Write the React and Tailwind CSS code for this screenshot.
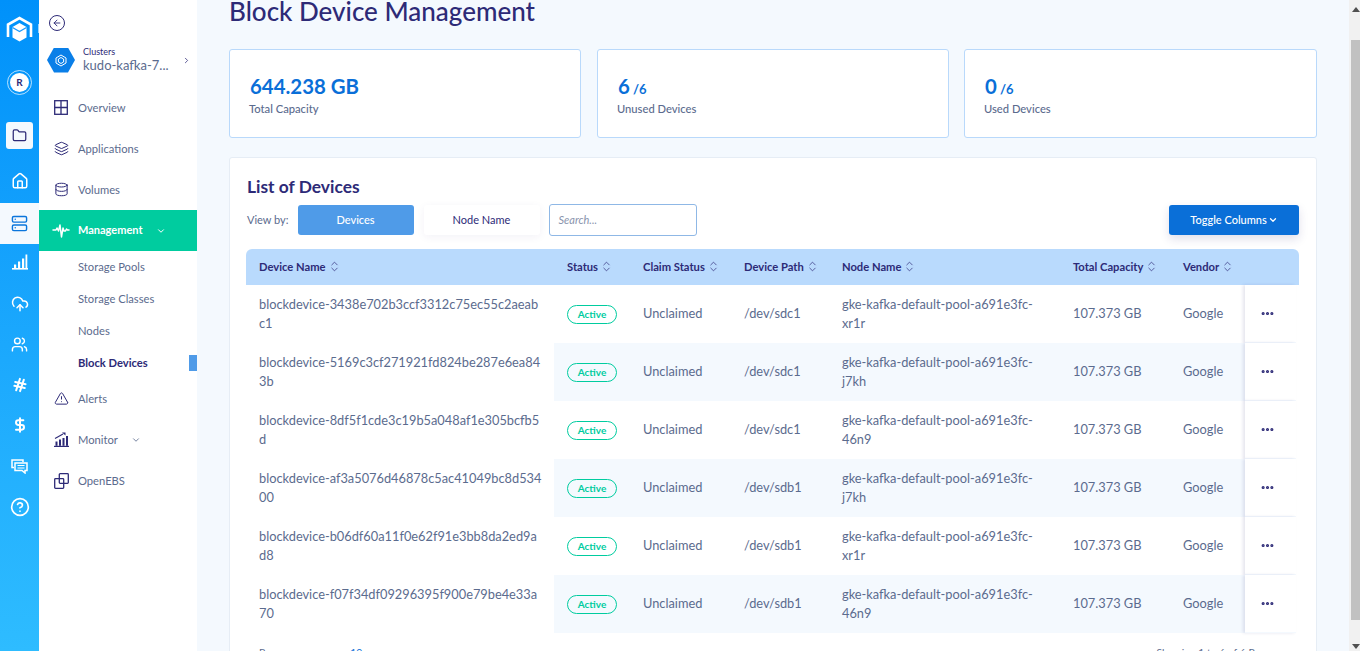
import {
  ArrowLeft,
  ChevronDown,
  ChevronRight,
  ChevronsUpDown,
  CircleHelp,
  CloudUpload,
  Database,
  DollarSign,
  Folder,
  Hash,
  House,
  Layers,
  MoreHorizontal,
  Server,
  TriangleAlert,
  Users,
} from "lucide-react";

const devices = [
  ["blockdevice-3438e702b3ccf3312c75ec55c2aeab", "c1", "/dev/sdc1", "xr1r"],
  ["blockdevice-5169c3cf271921fd824be287e6ea84", "3b", "/dev/sdc1", "j7kh"],
  ["blockdevice-8df5f1cde3c19b5a048af1e305bcfb5", "d", "/dev/sdc1", "46n9"],
  ["blockdevice-af3a5076d46878c5ac41049bc8d534", "00", "/dev/sdb1", "j7kh"],
  ["blockdevice-b06df60a11f0e62f91e3bb8da2ed9a", "d8", "/dev/sdb1", "xr1r"],
  ["blockdevice-f07f34df09296395f900e79be4e33a", "70", "/dev/sdb1", "46n9"],
];

const columns = [
  { label: "Device Name", width: "w-[321px] pl-[13px]" },
  { label: "Status", width: "w-[76px]" },
  { label: "Claim Status", width: "w-[101px]" },
  { label: "Device Path", width: "w-[98px]" },
  { label: "Node Name", width: "w-[231px]" },
  { label: "Total Capacity", width: "w-[110px]" },
  { label: "Vendor", width: "w-[100px]" },
];

const LogoCube = () => (
  <svg width="27" height="26" viewBox="0 0 27 26" fill="none">
    <path d="M2 21V8.500L13.500 2 25 8.500V21" stroke="#fff" strokeWidth="2.6" />
    <path d="M13.500 7l7 4v10.500l-7 4-7-4V11z" fill="#fff" />
    <path d="M6.500 11.500l7 4 7-4" stroke="#1a99fb" strokeWidth="1.3" />
  </svg>
);

const OverviewIcon = ({ className }) => (
  <svg width="14" height="15" viewBox="0 0 14 15" fill="none" stroke="currentColor" strokeWidth="1.3" className={className}>
    <rect x="0.700" y="0.700" width="12.600" height="13.600" />
    <path d="M7 0.700v13.600M0.700 7.500h12.600" />
  </svg>
);

const MonitorIcon = ({ className }) => (
  <svg width="15" height="15" viewBox="0 0 15 15" fill="currentColor" className={className}>
    <rect x="0" y="13.800" width="15" height="1.200" />
    <rect x="1.500" y="9.500" width="2" height="4.300" />
    <rect x="5" y="7.500" width="2" height="6.300" />
    <rect x="8.500" y="6" width="2" height="7.800" />
    <rect x="12" y="4" width="2" height="9.800" />
    <path d="M1 6.500l8-4.500" stroke="currentColor" strokeWidth="1.100" fill="none" />
    <path d="M8 0.500h3.500v3z" />
  </svg>
);

const OverlapIcon = ({ className }) => (
  <svg width="15" height="16" viewBox="0 0 15 16" fill="none" stroke="currentColor" strokeWidth="1.300" className={className}>
    <rect x="0.700" y="5.700" width="9" height="9.600" rx="0.800" />
    <rect x="5.300" y="0.700" width="9" height="9.600" rx="0.800" />
  </svg>
);

const RailChart = () => (
  <svg width="16" height="16" viewBox="0 0 16 16" fill="#fff">
    <rect x="0" y="14" width="16" height="1.600" />
    <rect x="2" y="10.500" width="2.200" height="3.500" />
    <rect x="6" y="7.500" width="2.200" height="6.500" />
    <rect x="10" y="4.500" width="2.200" height="9.500" />
    <rect x="13.500" y="0.500" width="1.800" height="13.500" />
  </svg>
);

const RailChat = () => (
  <svg width="17" height="15" viewBox="0 0 17 15" fill="none" stroke="#fff" strokeWidth="1.500">
    <path d="M12 3V1H1v7.500h2" />
    <path d="M4 4h12v7.500h-2v2.500l-3-2.500H4z" />
    <path d="M6.500 6.500h7M6.500 9h7" strokeWidth="1.200" />
  </svg>
);

const Rail = () => (
  <div className="relative w-[39px] shrink-0 flex flex-col items-center bg-gradient-to-b from-[#0091fa] to-[#2ebcff]">
    <div className="mt-[16px] h-[26px]">
      <LogoCube />
    </div>
    <span className="absolute right-0 top-[24px] w-px h-[9px] bg-white/60" />
    <div className="mt-[28px] w-[25px] h-[25px] rounded-full border border-white/70 p-[2px]">
      <div className="w-full h-full rounded-full bg-white flex items-center justify-center text-[10px] font-bold text-[#2d2a77]">
        R
      </div>
    </div>
    <div className="mt-[27px] w-[27px] h-[27px] rounded-[3px] bg-[#f4f9fe] flex items-center justify-center">
      <Folder size={15} strokeWidth={2} className="text-[#2d2a77]" />
    </div>
    <div className="mt-[20px] h-[24px] flex items-center">
      <House size={18} strokeWidth={2} className="text-white" />
    </div>
    <div className="mt-[10px] w-full h-[41px] bg-[#f4f9fe] flex items-center justify-center">
      <Server size={17} strokeWidth={2} className="text-[#0a75dc]" />
    </div>
    <div className="mt-[6px] h-[24px] flex items-center">
      <RailChart />
    </div>
    <div className="mt-[18px] h-[24px] flex items-center">
      <CloudUpload size={18} strokeWidth={2} className="text-white" />
    </div>
    <div className="mt-[16px] h-[24px] flex items-center">
      <Users size={17} strokeWidth={2} className="text-white" />
    </div>
    <div className="mt-[17px] h-[24px] flex items-center">
      <Hash size={16} strokeWidth={3} className="text-white rotate-12" />
    </div>
    <div className="mt-[16px] h-[24px] flex items-center">
      <DollarSign size={16} strokeWidth={3} className="text-white" />
    </div>
    <div className="mt-[17px] h-[24px] flex items-center">
      <RailChat />
    </div>
    <div className="mt-[17px] h-[24px] flex items-center">
      <CircleHelp size={20} strokeWidth={2} className="text-white" />
    </div>
  </div>
);

const NavItem = ({ icon: Icon, label, caret, size }) => (
  <div className="h-[41px] flex items-center pl-[15px]">
    <div className="w-[14px] flex justify-center shrink-0">
      <Icon size={size} strokeWidth={1.6} className="text-[#2d2a77] shrink-0" />
    </div>
    <span className="ml-[10px] pt-[2px] text-[11.2px] text-[#5b6b8e]">{label}</span>
    {caret && <ChevronDown size={10} className="ml-[13px] text-[#5b6b8e]" />}
  </div>
);

const SubItem = ({ label, active }) => (
  <div className="relative h-[32px] flex items-center pl-[39px]">
    <span className={active ? "text-[11.2px] font-bold text-[#2d2a77]" : "text-[11.2px] text-[#5b6b8e]"}>
      {label}
    </span>
    {active && <span className="absolute right-0 top-[8px] w-[8px] h-[16px] bg-[#4f9be8]" />}
  </div>
);

const Sidebar = () => (
  <div className="w-[158px] shrink-0 bg-white flex flex-col">
    <div className="pl-[10px] pt-[15px]">
      <div className="w-[16px] h-[16px] rounded-full border-[1.5px] border-[#2d2a77] flex items-center justify-center">
        <ArrowLeft size={10} strokeWidth={2.2} className="text-[#2d2a77]" />
      </div>
    </div>
    <div className="mt-[15px] flex items-center pl-[8px] pr-[6px]">
      <div className="w-[28px] h-[25px] bg-[#0a7fe8] [clip-path:polygon(25%_0,75%_0,100%_50%,75%_100%,25%_100%,0_50%)] flex items-center justify-center">
        <svg width="12" height="13" viewBox="0 0 12 13" fill="none" stroke="#fff" strokeWidth="1">
          <path d="M6 1l5 3v5l-5 3-5-3V4z" />
          <path d="M6 3.500l2.600 1.500v3L6 9.500 3.400 8V5z" />
        </svg>
      </div>
      <div className="ml-[8px] flex-1 min-w-0">
        <div className="text-[9px] leading-[11px] text-[#2d2a77]">Clusters</div>
        <div className="text-[13px] leading-[17px] text-[#5b6b8e]">kudo-kafka-7...</div>
      </div>
      <ChevronRight size={9} className="text-[#2d2a77]" />
    </div>
    <div className="mt-[13px]">
      <NavItem icon={OverviewIcon} label="Overview" />
      <NavItem icon={Layers} size={15} label="Applications" />
      <NavItem icon={Database} size={15} label="Volumes" />
    </div>
    <div className="h-[41px] bg-[#00cc9f] flex items-center pl-[13px]">
      <svg width="18" height="14" viewBox="0 0 18 14" fill="none" stroke="#fff" strokeWidth="1.5" strokeLinecap="round" strokeLinejoin="round">
        <path d="M1 6h3l1-2 1.500 3L8 1l1.500 12L11 4l1 3h1.500l1-2 1 1H17" />
      </svg>
      <span className="ml-[8px] text-[11px] font-bold text-white">Management</span>
      <ChevronDown size={10} strokeWidth={2.4} className="ml-[13px] text-white" />
    </div>
    <div>
      <SubItem label="Storage Pools" />
      <SubItem label="Storage Classes" />
      <SubItem label="Nodes" />
      <SubItem label="Block Devices" active />
    </div>
    <div className="-mt-px">
      <NavItem icon={TriangleAlert} size={15} label="Alerts" />
      <NavItem icon={MonitorIcon} label="Monitor" caret />
      <NavItem icon={OverlapIcon} label="OpenEBS" />
    </div>
  </div>
);

const StatCard = ({ value, total, label, className }) => (
  <div className={`h-[89px] bg-white border border-[#b9d9fb] rounded-[3px] pl-[20px] pt-[23px] ${className}`}>
    <div className="h-[28px] leading-[27px] text-[#0a6fd8] font-bold">
      <span className="text-[20.4px]">{value}</span>
      {total && <span className="text-[13px]"> {total}</span>}
    </div>
    <div className="-ml-px text-[11.2px] leading-[16px] font-medium text-[#5b6b8e]">{label}</div>
  </div>
);

const Row = ({ device, index }) => {
  const shaded = index % 2 === 1;
  const cell = shaded ? "bg-[#f4f9fe]" : "";
  return (
    <div className="flex h-[58px] text-[12.8px] leading-[19px] text-[#5b6b8e]">
      <div className="w-[308px] pl-[13px] flex items-center">
        <div>
          {device[0]}
          <br />
          {device[1]}
        </div>
      </div>
      <div className={`flex flex-1 ${cell}`}>
        <div className="w-[89px] pl-[13px] flex items-center">
          <span className="w-[50px] h-[19px] rounded-full border border-[#00cc9f] flex items-center justify-center text-[10px] font-bold text-[#00cc9f]">
            Active
          </span>
        </div>
        <div className="w-[101px] flex items-center pb-[2px]">Unclaimed</div>
        <div className="w-[98px] flex items-center pb-[2px]">{device[2]}</div>
        <div className="w-[231px] flex items-center">
          <div>
            gke-kafka-default-pool-a691e3fc-
            <br />
            {device[3]}
          </div>
        </div>
        <div className="w-[110px] flex items-center pb-[2px]">107.373 GB</div>
        <div className="flex-1 flex items-center pb-[2px]">Google</div>
      </div>
      <div className="w-[51px] mr-[3px] bg-white border-b border-[#f4f9fe] shadow-[-2px_0_3px_rgba(45,42,119,0.12)] flex items-center pl-[15px]">
        <MoreHorizontal size={15} strokeWidth={3} className="text-[#2d2a77]" />
      </div>
    </div>
  );
};

export default function App() {
  return (
    <div className="h-[651px] w-[1360px] flex overflow-hidden bg-[#f4f9fe] font-['Lato',sans-serif]">
      <Rail />
      <Sidebar />
      <main className="flex-1 min-w-0 h-[651px] overflow-hidden px-[32px]">
        <h1 className="mt-[-5px] text-[26px] leading-[32px] font-medium text-[#2d2a77]">
          Block Device Management
        </h1>
        <div className="mt-[22px] flex">
          <StatCard value="644.238 GB" label="Total Capacity" className="w-[352px]" />
          <StatCard value="6" total="/6" label="Unused Devices" className="w-[352px] ml-[16px]" />
          <StatCard value="0" total="/6" label="Used Devices" className="w-[353px] ml-[15px]" />
        </div>
        <section className="mt-[19px] bg-white border border-[#e6edf5] rounded-[3px] pl-[16px] pr-[17px] pt-[18px] h-[600px]">
          <h2 className="ml-px text-[17.4px] leading-[22px] font-bold text-[#2d2a77]">List of Devices</h2>
          <div className="mt-[6px] flex items-center">
            <span className="ml-px text-[11px] text-[#5b6b8e]">View by:</span>
            <button className="ml-[9px] w-[116px] h-[30px] rounded-[3px] bg-[#4f9be8] text-[11px] font-medium text-white">
              Devices
            </button>
            <button className="ml-[10px] w-[116px] h-[30px] rounded-[3px] bg-white shadow-[0_2px_8px_rgba(45,42,119,0.06)] text-[11px] text-[#2d2a77]">
              Node Name
            </button>
            <div className="ml-[9px] w-[148px] h-[32px] rounded-[3px] border border-[#8fb8e6] flex items-center pl-[9px] text-[11px] italic text-[#8a94ad]">
              Search...
            </div>
            <button className="ml-auto w-[130px] h-[30px] rounded-[3px] bg-[#0a6fd8] shadow-[0_4px_10px_rgba(45,42,119,0.15)] flex items-center justify-center text-[11px] font-medium text-white">
              Toggle Columns
              <ChevronDown size={10} strokeWidth={3} className="ml-[1px]" />
            </button>
          </div>
          <div className="mt-[13px] h-[36px] flex items-center rounded-t-[6px] bg-[#b9dafd] text-[11.2px] font-bold text-[#2d2a77]">
            {columns.map((col) => (
              <div key={col.label} className={`${col.width} flex items-center`}>
                {col.label}
                <ChevronsUpDown size={13} strokeWidth={1.3} className="ml-[2px]" />
              </div>
            ))}
          </div>
          {devices.map((device, index) => (
            <Row key={device[0]} device={device} index={index} />
          ))}
          <div className="mt-[12px] flex justify-between pl-[13px] pr-[26px] text-[10.4px] text-[#5b6b8e]">
            <span>
              Rows per page:<span className="ml-[22px] text-[#0a6fd8]">10</span>
            </span>
            <span>Showing 1 to 6 of 6 Rows</span>
          </div>
        </section>
      </main>
      <div className="w-[11px] shrink-0 h-[651px] bg-[#f1f1f1] flex flex-col">
        <div className="h-[40px] flex justify-end pt-[7px] pr-0">
          <svg width="8" height="5" viewBox="0 0 8 5" fill="#505050">
            <path d="M4 0l4 5H0z" />
          </svg>
        </div>
        <div className="h-[580px] ml-[2px] bg-[#c1c1c1]" />
        <div className="flex-1 flex justify-end items-end pb-[2px]">
          <svg width="8" height="5" viewBox="0 0 8 5" fill="#505050">
            <path d="M4 5l4-5H0z" />
          </svg>
        </div>
      </div>
    </div>
  );
}
